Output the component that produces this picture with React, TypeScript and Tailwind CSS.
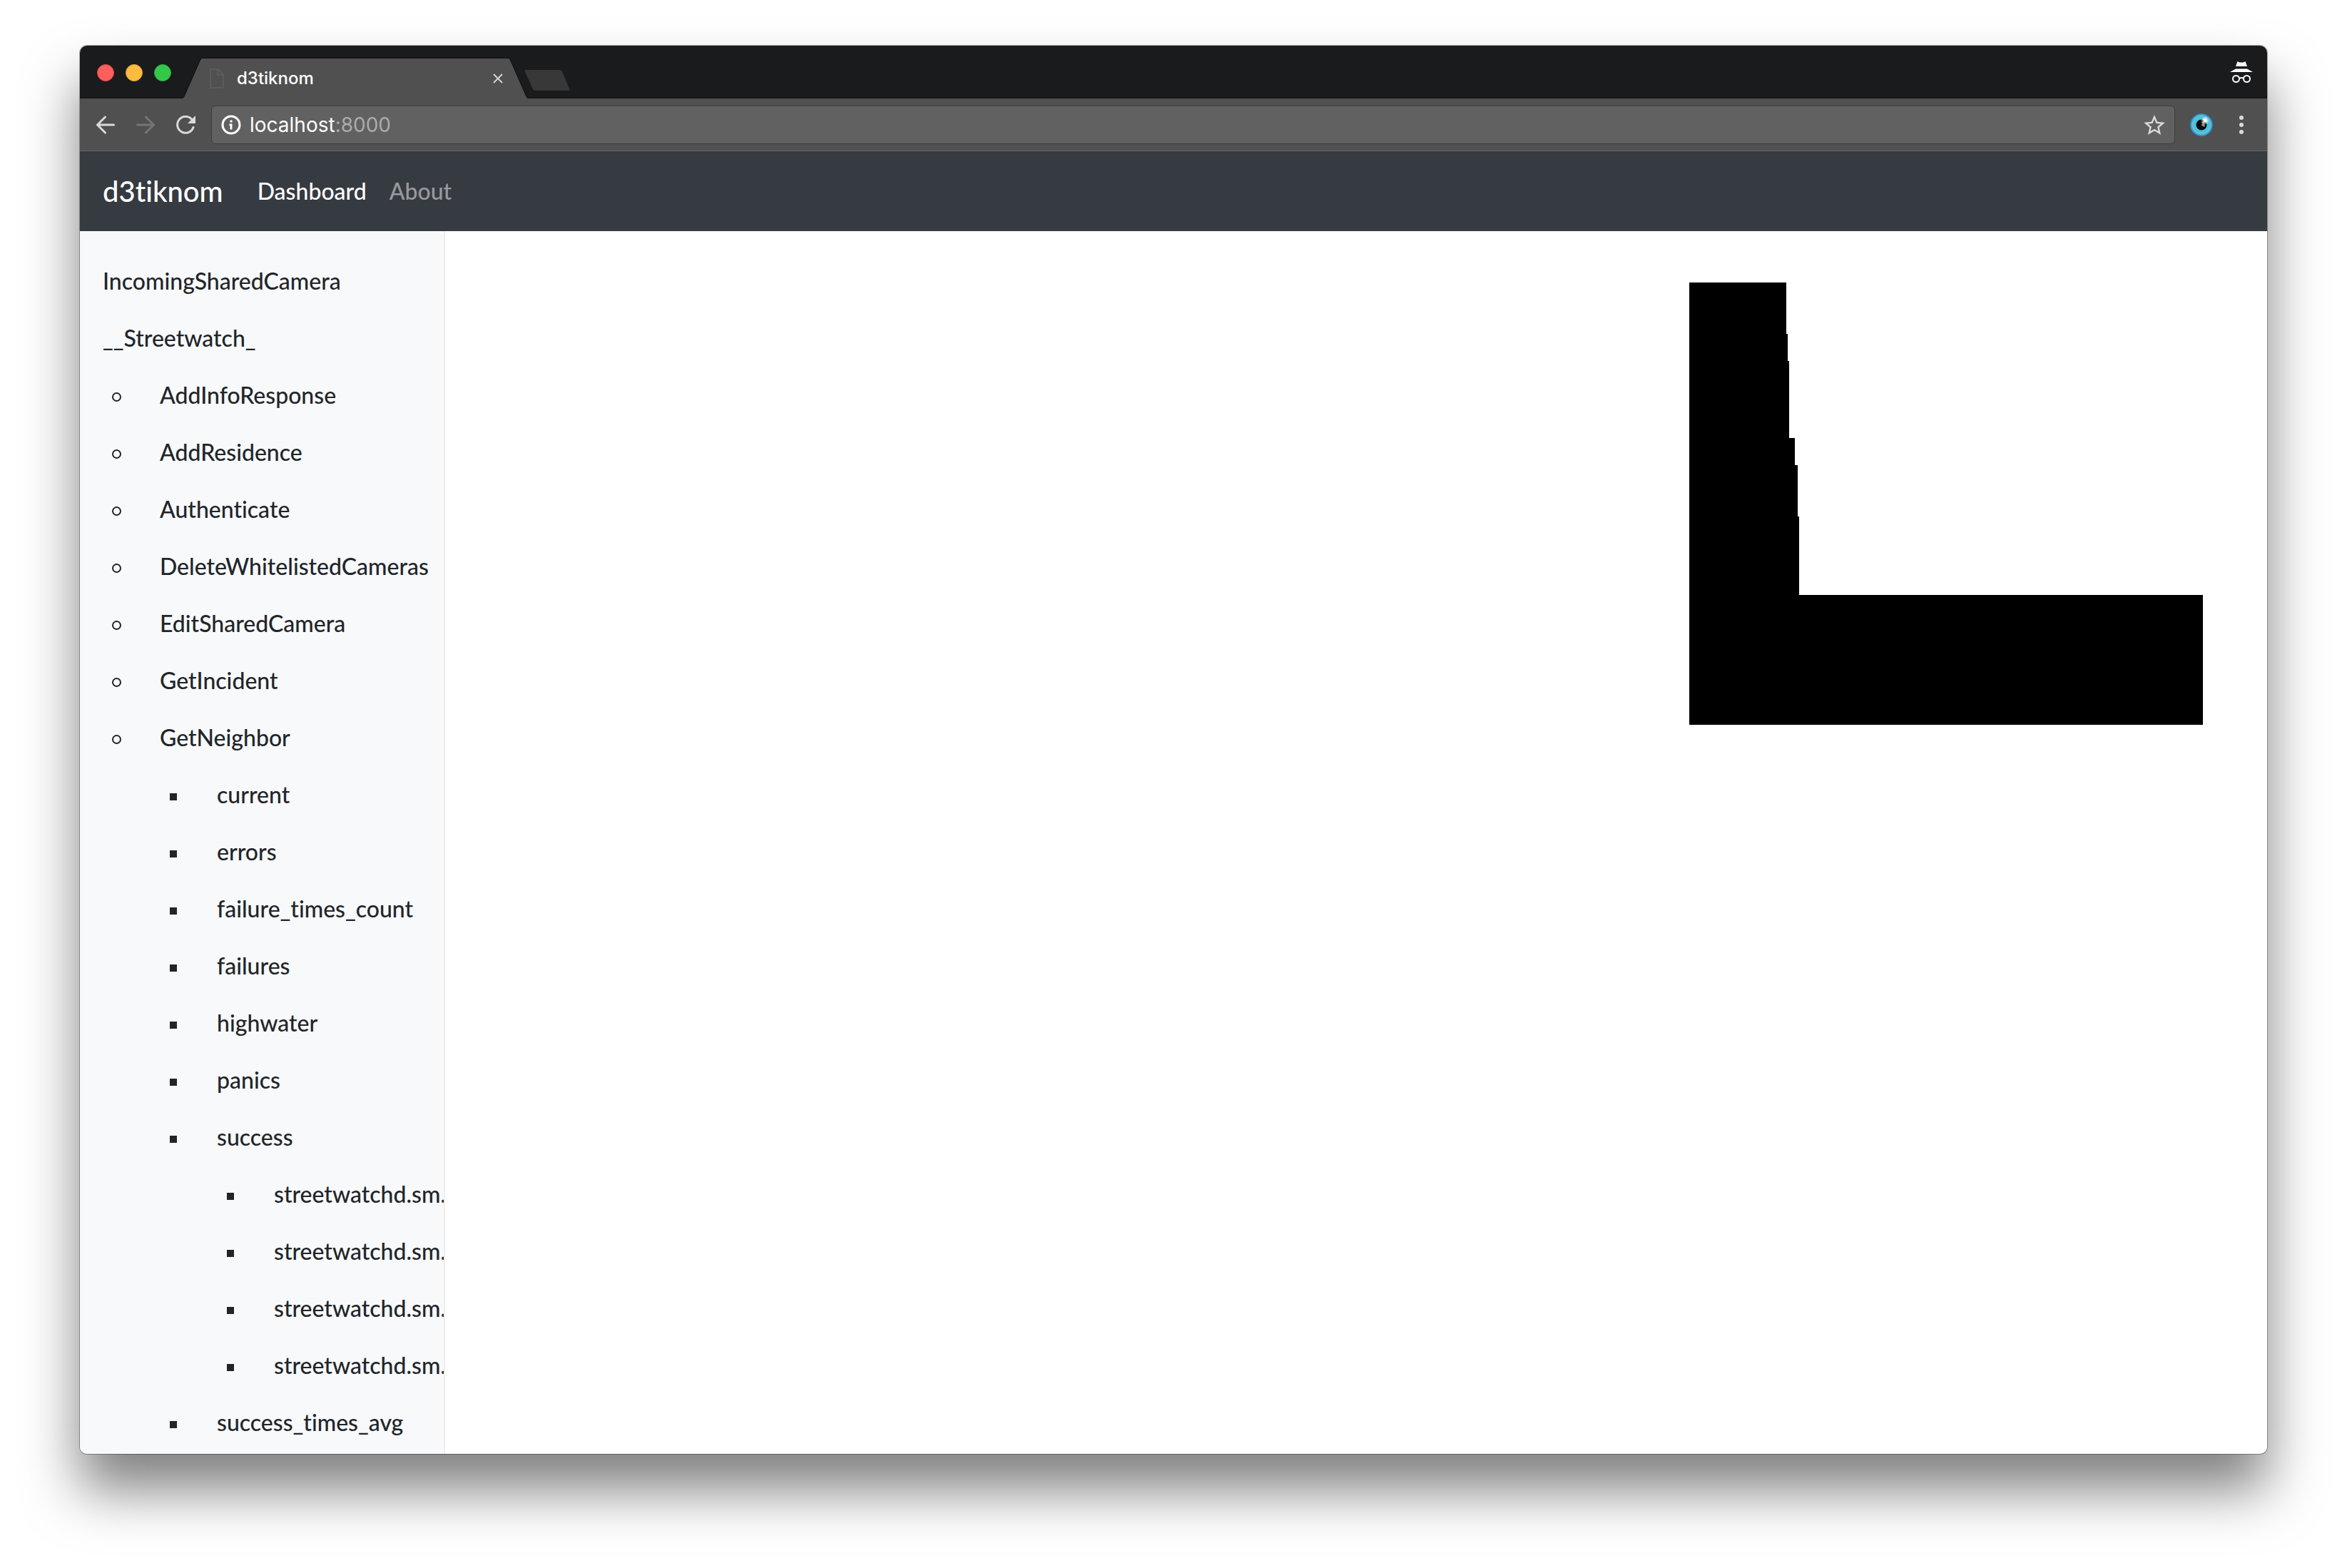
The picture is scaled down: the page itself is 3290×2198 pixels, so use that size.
import React from "react";

type Item = { label: string; children?: Item[] };

const metrics: Item[] = [
  { label: "IncomingSharedCamera" },
  {
    label: "__Streetwatch_",
    children: [
      { label: "AddInfoResponse" },
      { label: "AddResidence" },
      { label: "Authenticate" },
      { label: "DeleteWhitelistedCameras" },
      { label: "EditSharedCamera" },
      { label: "GetIncident" },
      {
        label: "GetNeighbor",
        children: [
          { label: "current" },
          { label: "errors" },
          { label: "failure_times_count" },
          { label: "failures" },
          { label: "highwater" },
          { label: "panics" },
          {
            label: "success",
            children: [
              { label: "streetwatchd.sm." },
              { label: "streetwatchd.sm." },
              { label: "streetwatchd.sm." },
              { label: "streetwatchd.sm." },
            ],
          },
          { label: "success_times_avg" },
        ],
      },
    ],
  },
];

function Marker({ depth }: { depth: number }) {
  if (depth === 0) return null;
  return (
    <span className="-ml-[35px] flex w-[35px] shrink-0 pt-[5px]">
      {depth === 1 ? (
        <span className="size-[13px] rounded-full border-2 border-[#212529]" />
      ) : (
        <span className="ml-px size-[10px] bg-[#212529]" />
      )}
    </span>
  );
}

function Tree({ items, depth = 0 }: { items: Item[]; depth?: number }) {
  return (
    <ul className={depth === 0 ? "list-none" : "list-none pl-20"}>
      {items.map((item, i) => (
        <li key={i}>
          <div className="flex items-center">
            <Marker depth={depth} />
            <a href="#" className="px-8 py-4 whitespace-nowrap">
              {item.label}
            </a>
          </div>
          {item.children && <Tree items={item.children} depth={depth + 1} />}
        </li>
      ))}
    </ul>
  );
}

/* Histogram bars: [top, height, width] */
const bars = [
  [0, 72, 136],
  [72, 38, 138],
  [110, 108, 140],
  [218, 38, 148],
  [256, 72, 152],
  [328, 110, 154],
  [438, 182, 720],
];

function Chart() {
  return (
    <svg width="720" height="620" viewBox="0 0 720 620" shapeRendering="crispEdges" role="img" aria-label="Histogram">
      {bars.map(([y, h, w]) => (
        <rect key={y} x="0" y={y} width={w} height={h} fill="#000" />
      ))}
    </svg>
  );
}

function TabStrip() {
  return (
    <header className="flex h-[74px] items-end bg-[#1a1b1d] pl-6 shadow-[inset_0_-1px_0_#111213]">
      <div className="flex gap-4 self-center pt-[2px]">
        <button aria-label="Close window" className="size-6 rounded-full border border-[#e2463f] bg-[#fc605c]" />
        <button aria-label="Minimize window" className="size-6 rounded-full border border-[#e0a033] bg-[#fdbc40]" />
        <button aria-label="Zoom window" className="size-6 rounded-full border border-[#27a93a] bg-[#34c84a]" />
      </div>
      <div className="relative ml-4 h-14 w-[484px]">
        <svg className="absolute inset-0 overflow-visible" width="484" height="56" viewBox="0 0 484 56" aria-hidden="true">
          <path d="M0 56 Q2 55 3 52 L25 2 Q26 0 28 0 H456 Q458 0 459 2 L481 52 Q482 55 484 56 Z" fill="#505050" />
          <path d="M0 55 Q2 54 3 51 L25 1 Q26 -1 28 -1 H456 Q458 -1 459 1 L481 51 Q482 54 484 55" fill="none" stroke="#111213" />
        </svg>
        <div className="relative flex h-full items-center pr-[35px] pl-[38px]">
          <svg width="20" height="28" viewBox="0 0 20 28" fill="none" stroke="#5b5b5b" strokeWidth="2" aria-hidden="true">
            <path d="M1 1 H12 L19 8 V27 H1 Z M11 1 V9 H19" />
          </svg>
          <span className="ml-[18px] flex-1 font-[Inter] text-[24px] leading-8 font-medium text-white">d3tiknom</span>
          <button aria-label="Close tab">
            <svg width="14" height="14" viewBox="0 0 14 14" stroke="#d4d4d4" strokeWidth="2">
              <path d="M1 1 L13 13 M13 1 L1 13" />
            </svg>
          </button>
        </div>
      </div>
      <button aria-label="New tab" className="mb-[11px] -ml-[5px]">
        <svg className="block" width="64" height="29" viewBox="0 0 64 29" fill="#383838">
          <path d="M2 0 H50 Q52 0 53 2 L63 26 Q64 29 62 29 H16 Q13 29 12 27 L1 3 Q0 0 2 0 Z" />
        </svg>
      </button>
      <svg className="mr-5 ml-auto self-center" width="32" height="30" viewBox="0 0 32 30" fill="none" aria-label="Incognito">
        <path d="M10.500 0 Q13 2 16 1.500 Q19 2 21.500 0 L24 7 H8 Z" fill="#fff" />
        <path d="M0 15 L8 10.500 H24 L32 15 Z" fill="#fff" />
        <circle cx="8.500" cy="24.500" r="4.500" stroke="#fff" strokeWidth="2" />
        <circle cx="23.500" cy="24.500" r="4.500" stroke="#fff" strokeWidth="2" />
        <path d="M13 24 Q16 22 19 24" stroke="#fff" strokeWidth="2" />
      </svg>
    </header>
  );
}

function Toolbar() {
  return (
    <div className="flex h-[74px] items-center border-b border-[#686868] bg-[#505050] pr-[33px] pl-[23px]">
      <button aria-label="Back">
        <svg width="26" height="26" viewBox="0 0 26 26" fill="none" stroke="#dadada" strokeWidth="3" strokeLinecap="round">
          <path d="M12.500 2 L1.500 13 L12.500 24 M2 13 H24.500" />
        </svg>
      </button>
      <button aria-label="Forward" className="ml-[30px]">
        <svg width="26" height="26" viewBox="0 0 26 26" fill="none" stroke="#757575" strokeWidth="3" strokeLinecap="round">
          <path d="M13.500 2 L24.500 13 L13.500 24 M24 13 H1.500" />
        </svg>
      </button>
      <button aria-label="Reload" className="ml-[30px]">
        <svg width="28" height="26" viewBox="0 0 28 26" fill="none" stroke="#dadada" strokeWidth="3">
          <path d="M22 5.500 A11.500 11.500 0 1 0 24 16.500" strokeLinecap="round" />
          <path d="M27 0 V11 H16 Z" fill="#dadada" stroke="none" />
        </svg>
      </button>
      <div className="ml-[21px] flex h-[54px] flex-1 items-center rounded-[6px] border border-[#3e3e3e] bg-[#616161] px-[13px]">
        <svg width="28" height="28" viewBox="0 0 28 28" fill="none" aria-hidden="true">
          <circle cx="14" cy="14" r="12" stroke="#fff" strokeWidth="3" />
          <path d="M12.500 7.500 H15.500 V10.500 H12.500 Z M11.500 12.500 H15.500 V20.500 H12.500 V15 H11.500 Z" fill="#fff" />
        </svg>
        <div className="ml-3 flex-1 font-[Inter] text-[28px] leading-9 font-normal text-white">
          localhost<span className="text-[#ababab]">:8000</span>
        </div>
        <button aria-label="Bookmark this page">
          <svg width="30" height="28" viewBox="2 2 20 19" fill="#dadada">
            <path d="M22 9.240l-7.190-.620L12 2 9.190 8.630 2 9.240l5.460 4.730L5.820 21 12 17.270 18.180 21l-1.630-7.030L22 9.240zM12 15.400l-3.760 2.270 1-4.280-3.320-2.880 4.380-.380L12 6.100l1.710 4.040 4.380.380-3.320 2.880 1 4.280L12 15.400z" />
          </svg>
        </button>
      </div>
      <button aria-label="Extension" className="ml-[21px]">
        <svg width="32" height="32" viewBox="0 0 32 32">
          <defs>
            <radialGradient id="iris">
              <stop offset="0.45" stopColor="#16e0ea" />
              <stop offset="0.62" stopColor="#4fb9d6" />
              <stop offset="0.78" stopColor="#74bdd8" />
              <stop offset="1" stopColor="#0f86bd" />
            </radialGradient>
            <radialGradient id="glint">
              <stop offset="0.2" stopColor="#ffffff" />
              <stop offset="1" stopColor="#ffffff" stopOpacity="0" />
            </radialGradient>
          </defs>
          <circle cx="16" cy="16" r="16" fill="url(#iris)" />
          <circle cx="16" cy="16" r="7.500" fill="#0d0a0a" />
          <path d="M15 12 L17 13 L16 17 L20 19 L21 17 L19 12 Z" fill="#8b8b8b" />
          <circle cx="21" cy="10" r="6" fill="url(#glint)" />
        </svg>
      </button>
      <button aria-label="Menu" className="ml-[37px]">
        <svg width="6" height="26" viewBox="0 0 6 26" fill="#dadada">
          <circle cx="3" cy="3" r="3" />
          <circle cx="3" cy="13" r="3" />
          <circle cx="3" cy="23" r="3" />
        </svg>
      </button>
    </div>
  );
}

export default function App() {
  return (
    <div className="flex h-screen flex-col bg-white px-28 pt-16 pb-40">
      <div className="flex min-h-0 flex-1 flex-col overflow-hidden rounded-[10px] bg-white font-[Lato,sans-serif] text-[32px] leading-[48px] font-medium text-[#212529] shadow-[0_0_0_1px_rgba(0,0,0,0.3),0_50px_78px_rgba(0,0,0,0.5)] [font-variant-ligatures:none]">
        <TabStrip />
        <Toolbar />
        <nav className="flex h-28 items-center bg-[#363a41] px-8">
          <a href="#" className="mr-8 text-[40px] leading-[60px] text-white">d3tiknom</a>
          <a href="#" className="p-4 text-white">Dashboard</a>
          <a href="#" className="p-4 text-[#989a9d]">About</a>
        </nav>
        <div className="flex min-h-0 flex-1">
          <aside className="w-128 shrink-0 overflow-hidden border-r-2 border-[#eeeeee] bg-[#f8f9fb] pt-[30px]">
            <Tree items={metrics} />
          </aside>
          <main className="flex flex-1 items-start justify-end px-[90px] py-[72px]">
            <Chart />
          </main>
        </div>
      </div>
    </div>
  );
}
